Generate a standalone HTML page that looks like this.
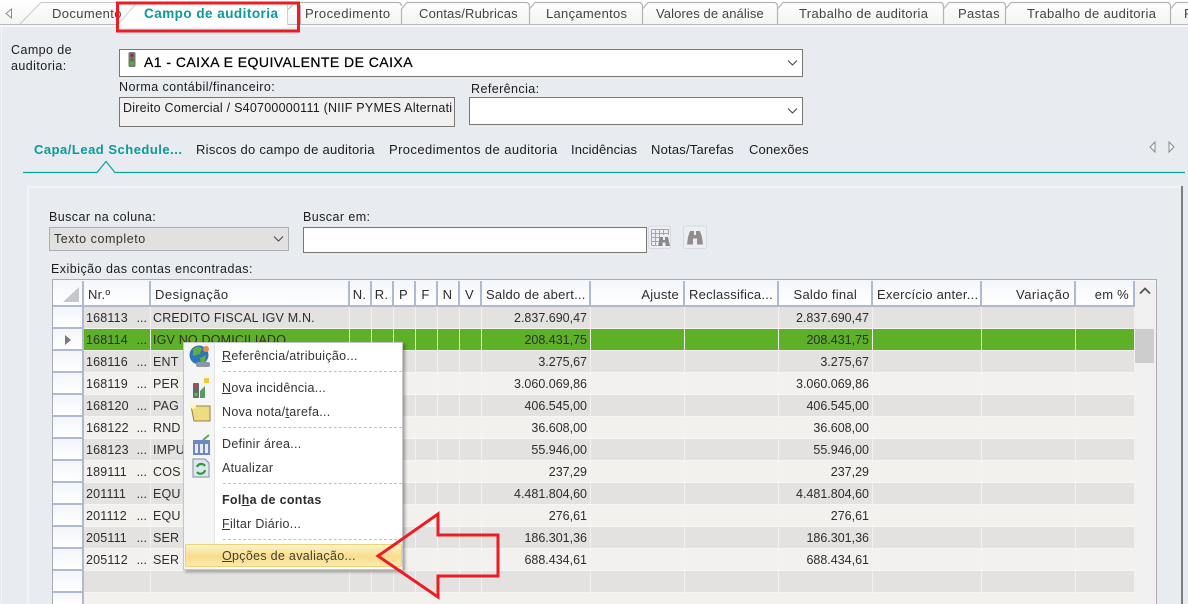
<!DOCTYPE html>
<html lang="pt"><head><meta charset="utf-8"><title>Campo de auditoria</title>
<style>
html,body{margin:0;padding:0}
body{width:1188px;height:604px;overflow:hidden;position:relative;background:#e8ebf0;font-family:"Liberation Sans",sans-serif;font-size:12.5px;color:#333}
.a{position:absolute;white-space:nowrap}
.t{position:absolute;top:6px;font-size:13px;letter-spacing:.38px;color:#444;white-space:nowrap}
.st{position:absolute;top:142px;font-size:13px;letter-spacing:.27px;color:#1c1c1c;white-space:nowrap}
.box{position:absolute;box-sizing:border-box;background:#fff;border:1px solid #777}
.l{position:absolute;font-size:12.5px;letter-spacing:.42px;color:#1c1c1c;white-space:nowrap}
table{position:absolute;left:53px;top:281px;border-collapse:separate;border-spacing:0;table-layout:fixed;width:1082px;font-size:12.5px;letter-spacing:.18px}
th{height:26px;box-sizing:border-box;padding:2px 3px 0 4px;font-size:13px;letter-spacing:.25px;font-weight:normal;color:#2d2d2d;text-align:left;background:linear-gradient(#f4f6fb,#fff);border-right:2px solid #aeb9d2;border-bottom:2px solid #aeb9d2;white-space:nowrap;overflow:hidden}
th.r{text-align:right;padding-right:4px}
td{height:22px;box-sizing:border-box;padding:0 3px 0 2px;border-right:1px solid #f3f2f0;border-bottom:1px solid #f6f6f4;white-space:nowrap;overflow:hidden;color:#2d2d2d}
td.i{background:linear-gradient(#f3f5fa,#fff);border-right:2px solid #aeb9d2;border-bottom:2px solid #aeb9d2;padding:0}
td.n{text-align:right;padding-right:3px;letter-spacing:0}
.g td{background:#e3e2e0}.w td{background:#f2f1ee}
.s td{background:#5eb126;border-bottom-color:#f0f0f0;border-right-color:#f0f0f0}
.g td.i,.w td.i,.s td.i{background:linear-gradient(#f3f5fa,#fff);border-right:2px solid #aeb9d2;border-bottom:2px solid #aeb9d2}
.d{float:right;letter-spacing:0}
.m{position:absolute;left:222px;font-size:12.5px;letter-spacing:.3px;color:#333;white-space:nowrap}
.sep{position:absolute;left:223px;width:179px;border-top:1px dashed #c2c2c2}
</style></head><body>

<!-- top tab bar -->
<div class="a" style="left:0;top:0;width:1188px;height:24px;background:linear-gradient(#fff,#f3f4f5)"></div>
<div class="a" style="left:0;top:24px;width:1188px;height:1px;background:#b9b9b9"></div>
<div class="a" style="left:0;top:25px;width:1188px;height:2px;background:#f8f8f8"></div>
<div class="a" style="left:1px;top:27px;width:1px;height:577px;background:#f6f7f9"></div>
<svg class="a" style="left:0;top:0" width="1188" height="32" viewBox="0 0 1188 32" fill="none">
<path d="M11.5 9 L6 13.500 L11.500 18 Z" stroke="#8a8a8a" fill="#fff"/>
<path d="M20 24 L41 2.500 H131" stroke="#c8c8c8"/>
<g stroke="#b5b5b5" stroke-width="1.200">
<path d="M401.500 24 V9 L407 2.500 H527 Q529 3 529.500 6 V24"/>
<path d="M300 2.500 H399 Q401 3 401.500 6"/>
<path d="M529.500 9 L535 2.500 H640 Q642 3 642.500 6 V24"/>
<path d="M642.500 9 L648 2.500 H775 Q777 3 777.500 6 V24"/>
<path d="M777.500 9 L783 2.500 H941 Q943 3 943.500 6 V24"/>
<path d="M943.500 9 L949 2.500 H1003 Q1005 3 1005.500 6 V24"/>
<path d="M1005.500 9 L1011 2.500 H1168 Q1170 3 1170.500 6 V24"/>
<path d="M1170.500 9 L1176 2.500 H1188"/>
</g>
<path d="M116 28 L137 2 H285 Q287 2 287.500 5 V28 Z" fill="#fff" stroke="none"/>
<path d="M116 27 L137 2.500 H285 Q287 3 287.500 6 V24" stroke="#d0d0d0"/>
<path d="M287.500 10 L295 2.500" stroke="#b5b5b5"/>
<path d="M300.500 24 V5" stroke="#b5b5b5" stroke-width="1.200"/>
</svg>
<div class="t" style="left:52px">Documento</div>
<div class="t" style="left:144px;font-size:13.5px;font-weight:bold;color:#0a9a98;letter-spacing:.47px">Campo de auditoria</div>
<div class="t" style="left:305px;letter-spacing:.45px">Procedimento</div>
<div class="t" style="left:419px;letter-spacing:.18px">Contas/Rubricas</div>
<div class="t" style="left:546px;letter-spacing:.3px">Lançamentos</div>
<div class="t" style="left:656px;letter-spacing:.1px">Valores de análise</div>
<div class="t" style="left:799px;letter-spacing:.33px">Trabalho de auditoria</div>
<div class="t" style="left:958px">Pastas</div>
<div class="t" style="left:1027px;letter-spacing:.33px">Trabalho de auditoria</div>
<div class="t" style="left:1184px">P</div>

<!-- header form -->
<div class="l" style="left:11px;top:42px;line-height:16px">Campo de<br>auditoria:</div>
<div class="box" style="left:119px;top:49px;width:684px;height:28px"></div>
<svg class="a" style="left:127px;top:52px" width="10" height="16" viewBox="0 0 10 16"><rect x="1.500" y="0" width="7" height="15" rx="1.500" fill="#777"/><circle cx="5" cy="3.500" r="1.500" fill="#7a3030"/><circle cx="5" cy="7.500" r="1.500" fill="#6d6a30"/><circle cx="5" cy="11.500" r="1.800" fill="#35c635"/></svg>
<div class="a" style="left:144px;top:54px;font-size:14px;letter-spacing:.45px;color:#000;-webkit-text-stroke:.25px #000">A1 - CAIXA E EQUIVALENTE DE CAIXA</div>
<svg class="a" style="left:787px;top:59px" width="12" height="8" fill="none"><path d="M1 1.500 L5.500 6 L10 1.500" stroke="#444"/></svg>
<div class="l" style="left:119px;top:80px">Norma contábil/financeiro:</div>
<div class="box" style="left:119px;top:97px;width:336px;height:30px;background:#f0f0f0;padding:3px 0 0 3px;font-size:12.500px;letter-spacing:.24px;color:#1c1c1c;overflow:hidden;white-space:nowrap">Direito Comercial / S40700000111 (NIIF PYMES Alternati</div>
<div class="l" style="left:471px;top:82px">Referência:</div>
<div class="box" style="left:469px;top:97px;width:334px;height:28px"></div>
<svg class="a" style="left:787px;top:107px" width="12" height="8" fill="none"><path d="M1 1.500 L5.500 6 L10 1.500" stroke="#444"/></svg>

<!-- sub tabs -->
<div class="st" style="left:34px;font-weight:bold;color:#0a9a98;letter-spacing:.5px">Capa/Lead Schedule...</div>
<div class="st" style="left:196px">Riscos do campo de auditoria</div>
<div class="st" style="left:389px;letter-spacing:.4px">Procedimentos de auditoria</div>
<div class="st" style="left:571px;letter-spacing:.1px">Incidências</div>
<div class="st" style="left:651px;letter-spacing:.2px">Notas/Tarefas</div>
<div class="st" style="left:749px;letter-spacing:.15px">Conexões</div>
<svg class="a" style="left:0;top:140px" width="1188" height="40" fill="none">
<path d="M23 32.500 H97 L106 21.500 L115 32.500 H1185" stroke="#0aa5a0" stroke-width="1.200"/>
<path d="M1155 2 L1150 7 L1155 12 Z M1169 2 L1174 7 L1169 12 Z" stroke="#8a8a8a" fill="#f4f5f7"/>
</svg>

<!-- inner panel -->
<div class="a" style="left:27px;top:186px;width:1154px;height:2px;background:#f2f4f7"></div>
<div class="a" style="left:27px;top:186px;width:2px;height:418px;background:#f2f4f7"></div>
<div class="a" style="left:1181px;top:186px;width:1.500px;height:418px;background:#7d7d7d"></div>

<div class="l" style="left:49px;top:210px">Buscar na coluna:</div>
<div class="a" style="left:49px;top:227px;width:240px;height:24px;box-sizing:border-box;background:#e1e1e1;border:1px solid #adadad;padding:4px 0 0 4px;font-size:12.500px;letter-spacing:.55px;color:#333">Texto completo</div>
<svg class="a" style="left:273px;top:235px" width="12" height="8" fill="none"><path d="M1 1.500 L5.500 6 L10 1.500" stroke="#444"/></svg>
<div class="l" style="left:303px;top:210px">Buscar em:</div>
<div class="box" style="left:303px;top:227px;width:344px;height:26px"></div>
<svg class="a" style="left:647px;top:225px" width="70" height="26" viewBox="0 0 70 26" fill="none">
<rect x="1.500" y="1" width="22" height="22.500" rx="2" stroke="#d6dae0" fill="#eceef2"/>
<path d="M4.500 4.500 H21.500 V10 M4.500 8.500 H21.500 M4.500 12.500 H13 M4.500 16.500 H12 M4.500 20.500 H10 M4.500 4.500 V20.500 M8.500 4.500 V20.500 M12.500 4.500 V17 M16.500 4.500 V10" stroke="#a6a6a6"/>
<path d="M11 21 L13 12 H16 V15 H18 V12 H21 L23 21 H18.500 V17.500 H15.500 V21 Z" fill="#8a8a8a"/>
<rect x="36.500" y="1" width="23" height="22.500" rx="2" stroke="#d6dae0" fill="#eceef2"/>
<path d="M40 19.500 L41 12 L43 6 H47 V10 H49 V6 H53 L55 12 L56 19.500 H50 V13.500 H46 V19.500 Z" fill="#8e8e8e"/>
</svg>
<div class="l" style="left:51px;top:262px;letter-spacing:.47px">Exibição das contas encontradas:</div>

<!-- grid -->
<div class="a" style="left:52px;top:279px;width:1105px;height:325px;box-sizing:border-box;border:1px solid #a9adb3;border-bottom:0;background:#f2f1ee;box-shadow:inset 1px 1px 0 #f5f6f8"></div>
<div class="a" style="left:1135px;top:281px;width:21px;height:323px;background:#f0f0f0"></div>
<svg class="a" style="left:1139px;top:286px" width="13" height="10" fill="none"><path d="M1 7.500 L6 2.500 L11 7.500" stroke="#555" stroke-width="1.800"/></svg>
<div class="a" style="left:1135px;top:329px;width:19px;height:34px;background:#cdcdcd"></div>

<table>
<colgroup><col style="width:31px"><col style="width:67px"><col style="width:199px"><col style="width:22px"><col style="width:22px"><col style="width:22px"><col style="width:22px"><col style="width:22px"><col style="width:22px"><col style="width:109px"><col style="width:94px"><col style="width:94px"><col style="width:94px"><col style="width:109px"><col style="width:94px"><col style="width:59px"></colgroup>
<tr><th style="padding:0"><svg width="28" height="23" style="display:block"><path d="M26 5 V20 H10 Z" fill="#c4c8cc"/></svg></th><th>Nr.º</th><th style="letter-spacing:.5px">Designação</th><th style="padding-left:2px;text-align:center">N.</th><th style="padding-left:2px;text-align:center">R.</th><th style="padding-left:2px;text-align:center">P</th><th style="padding-left:2px;text-align:center">F</th><th style="padding-left:2px;text-align:center">N</th><th style="padding-left:2px;text-align:center">V</th><th>Saldo de abert...</th><th class="r">Ajuste</th><th>Reclassifica...</th><th class="r" style="padding-right:14px">Saldo final</th><th>Exercício anter...</th><th class="r" style="letter-spacing:.45px">Variação</th><th class="r">em %</th></tr>
<tr class="g"><td class="i"></td><td>168113<span class="d">...</span></td><td>CREDITO FISCAL IGV M.N.</td><td></td><td></td><td></td><td></td><td></td><td></td><td class="n">2.837.690,47</td><td></td><td></td><td class="n">2.837.690,47</td><td></td><td></td><td></td></tr>
<tr class="s"><td class="i"><svg width="28" height="20" style="display:block"><path d="M12 6 L18 11 L12 16 Z" fill="#7a7a7a"/></svg></td><td>168114<span class="d">...</span></td><td>IGV NO DOMICILIADO</td><td></td><td></td><td></td><td></td><td></td><td></td><td class="n">208.431,75</td><td></td><td></td><td class="n">208.431,75</td><td></td><td></td><td></td></tr>
<tr class="g"><td class="i"></td><td>168116<span class="d">...</span></td><td>ENT</td><td></td><td></td><td></td><td></td><td></td><td></td><td class="n">3.275,67</td><td></td><td></td><td class="n">3.275,67</td><td></td><td></td><td></td></tr>
<tr class="w"><td class="i"></td><td>168119<span class="d">...</span></td><td>PER</td><td></td><td></td><td></td><td></td><td></td><td></td><td class="n">3.060.069,86</td><td></td><td></td><td class="n">3.060.069,86</td><td></td><td></td><td></td></tr>
<tr class="g"><td class="i"></td><td>168120<span class="d">...</span></td><td>PAG</td><td></td><td></td><td></td><td></td><td></td><td></td><td class="n">406.545,00</td><td></td><td></td><td class="n">406.545,00</td><td></td><td></td><td></td></tr>
<tr class="w"><td class="i"></td><td>168122<span class="d">...</span></td><td>RND</td><td></td><td></td><td></td><td></td><td></td><td></td><td class="n">36.608,00</td><td></td><td></td><td class="n">36.608,00</td><td></td><td></td><td></td></tr>
<tr class="g"><td class="i"></td><td>168123<span class="d">...</span></td><td>IMPU</td><td></td><td></td><td></td><td></td><td></td><td></td><td class="n">55.946,00</td><td></td><td></td><td class="n">55.946,00</td><td></td><td></td><td></td></tr>
<tr class="w"><td class="i"></td><td>189111<span class="d">...</span></td><td>COS</td><td></td><td></td><td></td><td></td><td></td><td></td><td class="n">237,29</td><td></td><td></td><td class="n">237,29</td><td></td><td></td><td></td></tr>
<tr class="g"><td class="i"></td><td>201111<span class="d">...</span></td><td>EQU</td><td></td><td></td><td></td><td></td><td></td><td></td><td class="n">4.481.804,60</td><td></td><td></td><td class="n">4.481.804,60</td><td></td><td></td><td></td></tr>
<tr class="w"><td class="i"></td><td>201112<span class="d">...</span></td><td>EQU</td><td></td><td></td><td></td><td></td><td></td><td></td><td class="n">276,61</td><td></td><td></td><td class="n">276,61</td><td></td><td></td><td></td></tr>
<tr class="g"><td class="i"></td><td>205111<span class="d">...</span></td><td>SER</td><td></td><td></td><td></td><td></td><td></td><td></td><td class="n">186.301,36</td><td></td><td></td><td class="n">186.301,36</td><td></td><td></td><td></td></tr>
<tr class="w"><td class="i"></td><td>205112<span class="d">...</span></td><td>SER</td><td></td><td></td><td></td><td></td><td></td><td></td><td class="n">688.434,61</td><td></td><td></td><td class="n">688.434,61</td><td></td><td></td><td></td></tr>
<tr class="g"><td class="i"></td><td></td><td></td><td></td><td></td><td></td><td></td><td></td><td></td><td></td><td></td><td></td><td></td><td></td><td></td><td></td></tr>
</table>
<div class="a" style="left:53px;top:593px;width:31px;height:11px;background:linear-gradient(#f3f5fa,#fff);box-sizing:border-box;border-right:2px solid #aeb9d2"></div>

<!-- context menu -->
<div class="a" style="left:183px;top:342px;width:220px;height:228px;box-sizing:border-box;background:#fff;border:1px solid #c6c6c6;box-shadow:2px 2px 3px rgba(0,0,0,.35)"></div>
<div class="a" style="left:184px;top:343px;width:30px;height:226px;background:#f5f5f5;border-right:1px solid #e2e3e3"></div>
<svg class="a" style="left:188px;top:344px" width="26" height="140" viewBox="0 0 26 140">
<circle cx="11" cy="11" r="9.500" fill="#2c76b8"/><path d="M5 5 Q10 1 14 4 L12 10 L5 12 Z" fill="#5fae3e"/><path d="M12 14 L18 11 L17 18 L13 19 Z" fill="#5fae3e"/><circle cx="18" cy="5" r="3" fill="#f0884a"/><rect x="8" y="18" width="14" height="5" rx="2" fill="#8c96a5"/>
<rect x="5" y="39" width="6" height="15" rx="1" fill="#666"/><circle cx="8" cy="42" r="1.600" fill="#c44"/><circle cx="8" cy="50.500" r="1.700" fill="#4c4"/><path d="M12 54 V47 L17 42 V54 Z" fill="#5a9a62"/><rect x="16" y="34" width="5" height="5" fill="#f3c93c"/>
<path d="M3 62 H22 V77 H6 Z" fill="#efdb82" stroke="#8f8350" stroke-width="1"/><circle cx="5" cy="62" r="3" fill="#fff6b8"/>
<rect x="5" y="96" width="17" height="15" fill="#6f88c4"/><rect x="7" y="100" width="3" height="9" fill="#e9edf6"/><rect x="12" y="100" width="3" height="9" fill="#e9edf6"/><rect x="17" y="100" width="3" height="9" fill="#e9edf6"/><path d="M15 96 L21 91" stroke="#6aa84f" stroke-width="2"/>
<path d="M5 115 H17 L21 119 V133 H5 Z" fill="#dfe7ee" stroke="#7d8fa3" stroke-width="1"/><path d="M9 123 A4.500 4.500 0 0 1 17 122 M17 126 A4.500 4.500 0 0 1 9 128" stroke="#2e9a3c" stroke-width="2.200" fill="none"/>
</svg>
<div class="m" style="top:349px"><u>R</u>eferência/atribuição...</div>
<div class="sep" style="top:371px"></div>
<div class="m" style="top:381px"><u>N</u>ova incidência...</div>
<div class="m" style="top:405px">Nova nota/<u>t</u>arefa...</div>
<div class="sep" style="top:427px"></div>
<div class="m" style="top:437px">Definir área...</div>
<div class="m" style="top:461px">Atualizar</div>
<div class="sep" style="top:483px"></div>
<div class="m" style="top:493px;font-weight:bold;color:#2e2e2e">Fol<u>h</u>a de contas</div>
<div class="m" style="top:517px"><u>F</u>iltar Diário...</div>
<div class="sep" style="top:539px"></div>
<div class="a" style="left:185px;top:544px;width:217px;height:23px;box-sizing:border-box;border:1px solid #ecd27a;border-radius:2px;background:linear-gradient(#fdf3c8,#f8dd8c 55%,#fbe9ae)"></div>
<div class="m" style="top:549px;color:#44402f"><u>O</u>pções de avaliação...</div>

<!-- annotations -->
<svg class="a" style="left:0;top:0" width="1188" height="604" fill="none">
<rect x="117.500" y="3" width="181" height="28" stroke="#ed1c24" stroke-width="3"/>
<path d="M378 556 L438 514 V535 H498 V576 H438 V597 Z" stroke="#ed1c24" stroke-width="3"/>
</svg>
</body></html>
